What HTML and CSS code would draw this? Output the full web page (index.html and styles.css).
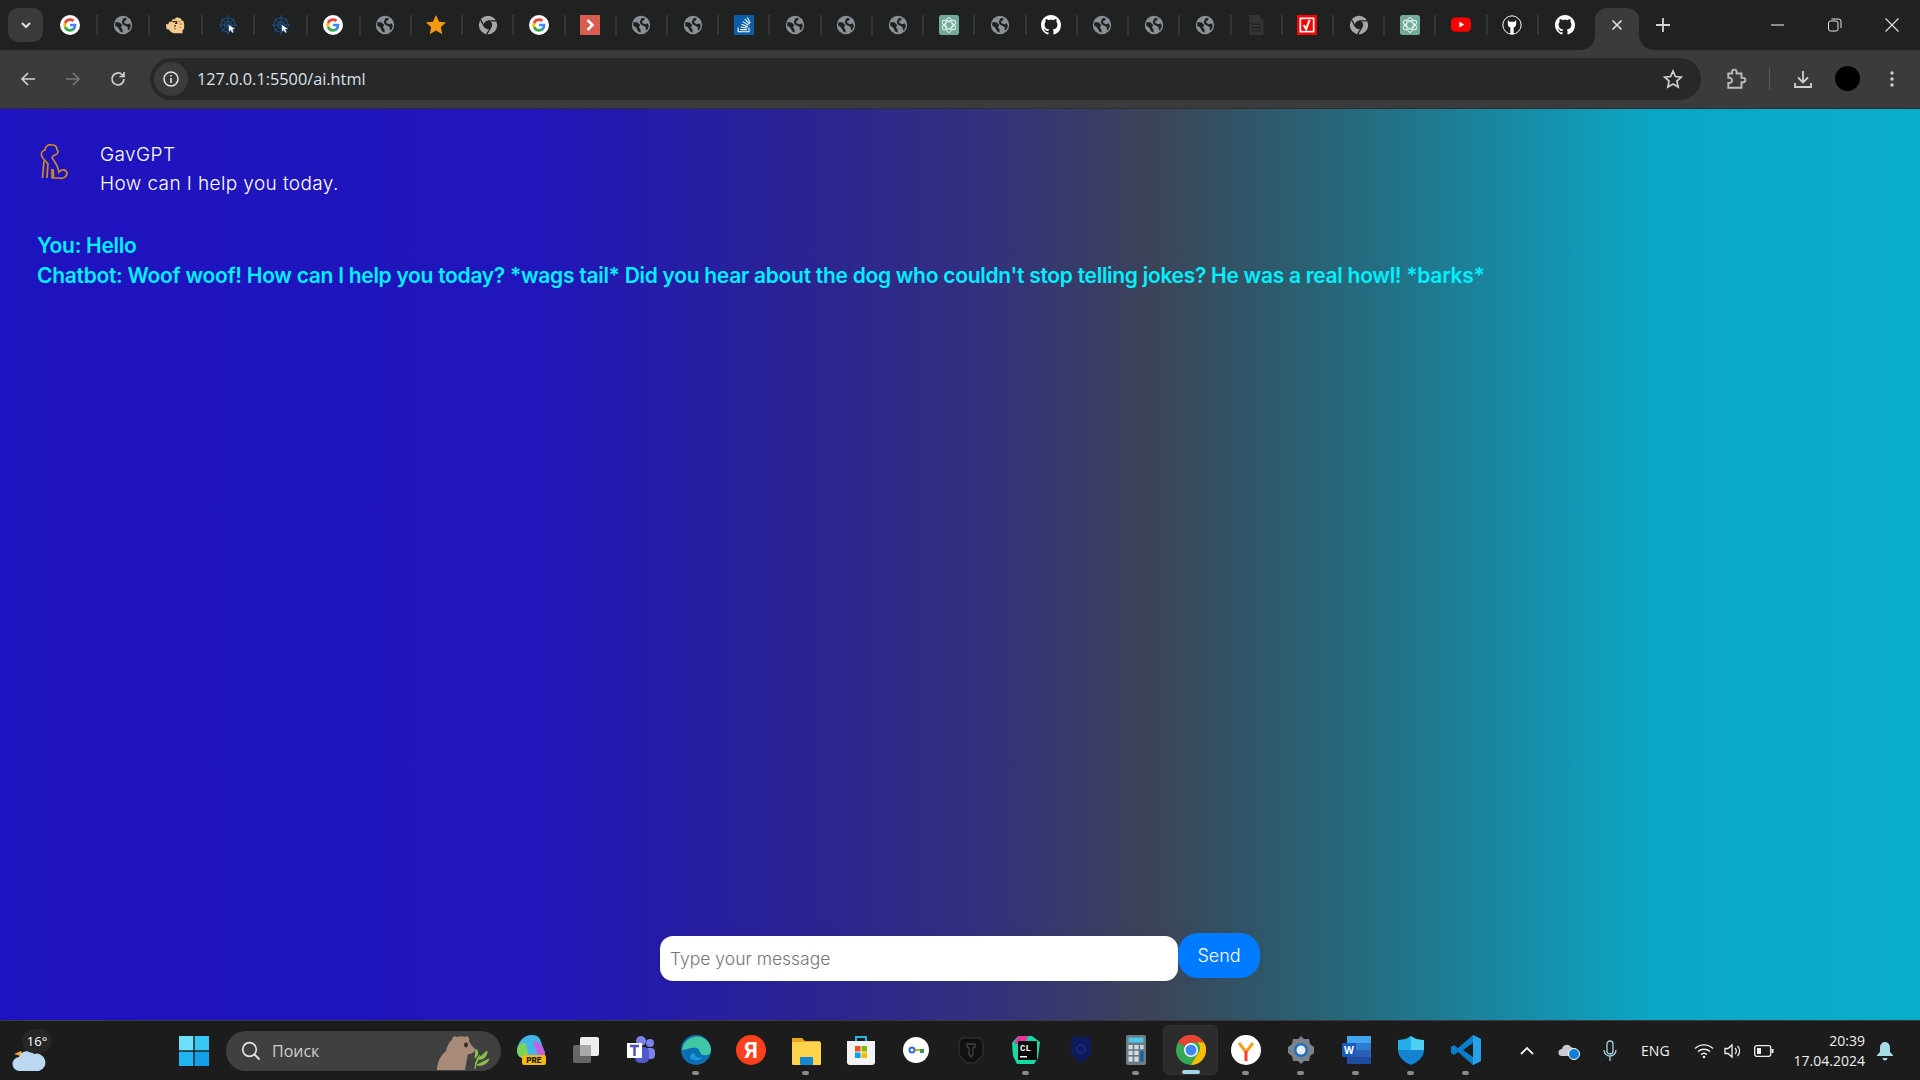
FILE: index.html
```html
<!DOCTYPE html>
<html lang="en">
<head>
    <meta charset="UTF-8">
    <title>GavGPT</title>
    <link rel="stylesheet" href="styles.css">
</head>
<body>
    <svg class="defs" width="0" height="0">
        <symbol id="i-g" viewBox="0 0 24 24">
            <circle cx="12" cy="12" r="12" fill="#fff"/>
            <path d="M19.6 12.2c0-.6-.1-1.100-.2-1.600H12v3h4.300c-.2 1-.8 1.900-1.600 2.400v2h2.600c1.500-1.400 2.300-3.400 2.300-5.800z" fill="#4285f4"/>
            <path d="M12 20c2.200 0 4-.7 5.300-2l-2.600-2c-.7.500-1.600.8-2.700.8-2.100 0-3.900-1.400-4.500-3.300H4.800v2.100C6.100 18.200 8.800 20 12 20z" fill="#34a853"/>
            <path d="M7.500 13.500c-.3-1-.3-2 0-3V8.400H4.800a8 8 0 0 0 0 7.200z" fill="#fbbc05"/>
            <path d="M12 7.200c1.200 0 2.200.4 3 1.200l2.300-2.300C16 4.800 14.200 4 12 4 8.800 4 6.100 5.800 4.800 8.400l2.700 2.100c.6-1.900 2.400-3.300 4.500-3.300z" fill="#ea4335"/>
        </symbol>
        <symbol id="i-globe" viewBox="0 0 24 24">
            <circle cx="12" cy="12" r="11" fill="#8b9097"/>
            <path d="M3 8.500l5 .5 3 3-1.500 3 2 2.500v3.500l-2.500-1-3-5-3.500-2.500zM13 3.500l3.500.5-1 2.500-2.500 1 1 2.500 3.500 1 2.500-1 1.500 3-1.500 4-2 1.500-.5-4-3-1.500-3-2-1-3 1.500-3z" fill="#202222"/>
        </symbol>
        <symbol id="i-web" viewBox="0 0 24 24">
            <g fill="none" stroke="#1c4f86" stroke-width="1.200">
                <path d="M12 0v24M1 12h22M4 4l16 16M20 4L4 20"/>
                <path d="M12 3l6.500 2.500L21 12l-2.500 6.500L12 21l-6.500-2.500L3 12l2.500-6.500z"/>
                <path d="M12 7.500l3.200 1.300 1.300 3.200-1.300 3.200-3.200 1.300-3.200-1.300L7.500 12l1.300-3.200z"/>
            </g>
            <path d="M13 12l7 4.500-3 .8 1.600 3.300-1.600.8-1.600-3.300-2.200 1.800z" fill="#fff"/>
        </symbol>
        <symbol id="i-chrome" viewBox="0 0 24 24">
            <circle cx="12" cy="12" r="11" fill="#a4a6a8"/>
            <circle cx="12" cy="12" r="5" fill="#202222"/>
            <path d="M12 7h10M8 14.500L3 5.500M15.500 14.500L10.500 23" stroke="#202222" stroke-width="1.500"/>
        </symbol>
        <symbol id="i-gpt" viewBox="0 0 24 24">
            <rect width="24" height="24" rx="3" fill="#74aa9c"/>
            <g fill="none" stroke="#e6f3ef" stroke-width="1.200">
                <ellipse cx="12" cy="12" rx="4" ry="9"/>
                <ellipse cx="12" cy="12" rx="4" ry="9" transform="rotate(60 12 12)"/>
                <ellipse cx="12" cy="12" rx="4" ry="9" transform="rotate(120 12 12)"/>
            </g>
        </symbol>
        <symbol id="i-github" viewBox="0 0 16 16">
            <path fill="#fff" d="M8 0C3.580 0 0 3.580 0 8c0 3.540 2.290 6.530 5.470 7.590.4.070.55-.17.55-.38 0-.19-.01-.82-.01-1.490-2.010.37-2.530-.49-2.690-.94-.09-.23-.48-.94-.82-1.130-.28-.15-.68-.52-.01-.53.630-.01 1.080.58 1.230.82.720 1.210 1.870.87 2.330.66.070-.52.280-.87.510-1.070-1.780-.2-3.640-.89-3.640-3.950 0-.87.310-1.590.820-2.150-.08-.2-.36-1.020.08-2.120 0 0 .670-.21 2.200.82.640-.18 1.320-.27 2-.27s1.360.09 2 .27c1.530-1.040 2.200-.82 2.200-.82.440 1.100.160 1.920.08 2.120.51.560.82 1.270.82 2.150 0 3.070-1.870 3.750-3.650 3.950.290.250.540.730.540 1.480 0 1.070-.01 1.930-.01 2.200 0 .210.150.460.550.380A8.010 8.010 0 0 0 16 8c0-4.420-3.580-8-8-8z"/>
        </symbol>
    </svg>

    <header class="tabstrip">
        <button class="tab-search">
            <svg width="12" height="12" viewBox="0 0 12 12"><path d="M2 4l4 4 4-4" fill="none" stroke="#e3e3e3" stroke-width="2"/></svg>
        </button>
        <div class="tabs">
            <div class="tab"><svg class="fav"><use href="#i-g"/></svg></div>
            <div class="tab"><svg class="fav"><use href="#i-globe"/></svg></div>
            <div class="tab">
                <svg class="fav" viewBox="0 0 24 24">
                    <path d="M1 11h3l1-3h3l1-3h3l1-2h3l1 1 2 0 1 3h2l1 4v5l-2 3v3H10l-3-2-3-3H2z" fill="#f6cb90"/>
                    <path d="M9 8h5v2h-2M12 12v2M12 16v1" fill="none" stroke="#3a2a15" stroke-width="1.600"/>
                    <path d="M16 7l3 2M17 11l4 0M17 15l3 0" stroke="#c08a4a" stroke-width="1.200"/>
                </svg>
            </div>
            <div class="tab"><svg class="fav"><use href="#i-web"/></svg></div>
            <div class="tab"><svg class="fav"><use href="#i-web"/></svg></div>
            <div class="tab"><svg class="fav"><use href="#i-g"/></svg></div>
            <div class="tab"><svg class="fav"><use href="#i-globe"/></svg></div>
            <div class="tab">
                <svg class="fav" viewBox="0 0 24 24"><path d="M12 0l3.700 8 8.300.9-6.200 5.700 1.800 8.400L12 18.700 4.400 23l1.800-8.400L0 8.900 8.300 8z" fill="#f29a13"/></svg>
            </div>
            <div class="tab"><svg class="fav"><use href="#i-chrome"/></svg></div>
            <div class="tab"><svg class="fav"><use href="#i-g"/></svg></div>
            <div class="tab">
                <svg class="fav" viewBox="0 0 24 24"><rect width="24" height="24" rx="1" fill="#d85c50"/><path d="M9 6l6 6-6 6" fill="none" stroke="#fff" stroke-width="3"/></svg>
            </div>
            <div class="tab"><svg class="fav"><use href="#i-globe"/></svg></div>
            <div class="tab"><svg class="fav"><use href="#i-globe"/></svg></div>
            <div class="tab">
                <svg class="fav" viewBox="0 0 24 24">
                    <rect width="24" height="24" fill="#0a5ea8"/>
                    <path d="M5 15v5h13v-5M7.500 17.500h8M8 14.500l8 1M9 11l7.500 3M10.500 8l7 4.500M13 5l5.500 6M16 3l3.500 7" fill="none" stroke="#fff" stroke-width="1.300"/>
                </svg>
            </div>
            <div class="tab"><svg class="fav"><use href="#i-globe"/></svg></div>
            <div class="tab"><svg class="fav"><use href="#i-globe"/></svg></div>
            <div class="tab"><svg class="fav"><use href="#i-globe"/></svg></div>
            <div class="tab"><svg class="fav"><use href="#i-gpt"/></svg></div>
            <div class="tab"><svg class="fav"><use href="#i-globe"/></svg></div>
            <div class="tab"><svg class="fav"><use href="#i-github"/></svg></div>
            <div class="tab"><svg class="fav"><use href="#i-globe"/></svg></div>
            <div class="tab"><svg class="fav"><use href="#i-globe"/></svg></div>
            <div class="tab"><svg class="fav"><use href="#i-globe"/></svg></div>
            <div class="tab">
                <svg class="fav" viewBox="0 0 24 24"><path d="M4 0h11l6 6v18H4z" fill="#333535"/><path d="M7 11h11M7 15h11M7 19h11" stroke="#202222" stroke-width="1.500"/></svg>
            </div>
            <div class="tab">
                <svg class="fav" viewBox="0 0 24 24"><rect width="24" height="24" fill="#f00"/><rect x="3" y="3" width="18" height="18" fill="#fff"/><rect x="5" y="5" width="14" height="14" fill="#f00"/><path d="M8 12l3 5 4-11" fill="none" stroke="#fff" stroke-width="2.500"/></svg>
            </div>
            <div class="tab"><svg class="fav"><use href="#i-chrome"/></svg></div>
            <div class="tab"><svg class="fav"><use href="#i-gpt"/></svg></div>
            <div class="tab">
                <svg class="fav" viewBox="0 0 24 24"><rect y="3" width="24" height="17" rx="5" fill="#f00"/><path d="M10 8l6 3.500-6 3.500z" fill="#fff"/></svg>
            </div>
            <div class="tab">
                <svg class="fav" viewBox="0 0 24 24"><circle cx="12" cy="12" r="11" fill="#202222" stroke="#fff" stroke-width="1.200"/><path d="M7 6l2 2h6l2-2v5l-1 3-2 1v8h-4v-8l-2-1-1-3z" fill="#fff"/></svg>
            </div>
            <div class="tab"><svg class="fav"><use href="#i-github"/></svg></div>
        </div>
        <div class="tab-active">
            <svg width="12" height="12" viewBox="0 0 12 12"><path d="M1.500 1.500l9 9M10.500 1.500l-9 9" stroke="#e3e3e3" stroke-width="1.600"/></svg>
        </div>
        <div class="tab-new">
            <svg width="14" height="14" viewBox="0 0 14 14"><path d="M7 0v14M0 7h14" stroke="#d5d5d5" stroke-width="1.800"/></svg>
        </div>
        <div class="win-buttons">
            <div class="win-btn"><svg width="14" height="14" viewBox="0 0 14 14"><path d="M0 7h13" stroke="#e3e3e3" stroke-width="1.100"/></svg></div>
            <div class="win-btn"><svg width="14" height="14" viewBox="0 0 14 14"><rect x=".5" y="3" width="9.500" height="10" rx="2" fill="none" stroke="#e3e3e3"/><path d="M3.500 1h7a2.500 2.500 0 0 1 2.500 2.500V10" fill="none" stroke="#e3e3e3"/></svg></div>
            <div class="win-btn"><svg width="14" height="14" viewBox="0 0 14 14"><path d="M.5.500l13 13M13.500.500l-13 13" stroke="#e3e3e3" stroke-width="1.100"/></svg></div>
        </div>
    </header>

    <nav class="toolbar">
        <svg class="tool-icon" viewBox="0 0 16 16"><path d="M15 8H2M8 2L2 8l6 6" fill="none" stroke="#cfcfcf" stroke-width="1.700"/></svg>
        <svg class="tool-icon" viewBox="0 0 16 16"><path d="M1 8h13M8 2l6 6-6 6" fill="none" stroke="#777" stroke-width="1.700"/></svg>
        <svg class="tool-icon" viewBox="0 0 16 16"><path d="M14 8a6 6 0 1 1-1.800-4.300L14 5.500M14 1v4.500H9.500" fill="none" stroke="#cfcfcf" stroke-width="1.700"/></svg>
        <div class="omnibox">
            <span class="site-info">
                <svg width="16" height="16" viewBox="0 0 16 16"><circle cx="8" cy="8" r="7" fill="none" stroke="#e3e3e3" stroke-width="1.500"/><path d="M8 7v5M8 4v1.600" stroke="#e3e3e3" stroke-width="1.600"/></svg>
            </span>
            <span class="url">127.0.0.1:5500/ai.html</span>
            <svg class="star" width="20" height="20" viewBox="0 0 20 20"><path d="M10 2l2.400 5.500 5.900.6-4.400 4 1.300 5.900L10 15l-5.200 3 1.300-5.900-4.400-4 5.900-.6z" fill="none" stroke="#cfcfcf" stroke-width="1.700"/></svg>
        </div>
        <svg class="ext-icon" viewBox="0 0 20 20"><path d="M3 5h3.500V3.500a2 2 0 0 1 4 0V5H15v4h1.500a2 2 0 0 1 0 4H15v5H3v-4.500h1.500a2.300 2.300 0 0 0 0-4.500H3z" fill="none" stroke="#bdbdbd" stroke-width="1.700"/></svg>
        <span class="tool-sep"></span>
        <svg class="dl-icon" viewBox="0 0 20 20"><path d="M10 2v11M5 8.500l5 5 5-5M2 14v4h16v-4" fill="none" stroke="#cfcfcf" stroke-width="1.800"/></svg>
        <span class="avatar"></span>
        <svg class="menu-icon" viewBox="0 0 4 16"><circle cx="2" cy="2" r="1.700" fill="#cfcfcf"/><circle cx="2" cy="8" r="1.700" fill="#cfcfcf"/><circle cx="2" cy="14" r="1.700" fill="#cfcfcf"/></svg>
    </nav>

    <main class="page">
        <div class="chat-head">
            <svg class="dog" viewBox="0 0 28 36">
                <path d="M7 34l1-14C6 17 2 15 1.500 11 1 8.500 3 6.500 5 6c0-4 4-6 7-5 3 0 5 2 5 5 2 1 1 4-2 5l-2 1c-1 1-1 2 0 3 3 4 5 8 6 13 2-3 7-3 8 1 0 4-4 6-8 5h-6c1-2 0-6 0-9" fill="none" stroke="#d08a24" stroke-width="1.700"/>
                <path d="M4 17L2.500 34M12 25v9" fill="none" stroke="#d08a24" stroke-width="1.700"/>
            </svg>
            <div class="chat-intro">
                <div>GavGPT</div>
                <div>How can I help you today.</div>
            </div>
        </div>
        <div class="messages">
            <div>You: Hello</div>
            <div>Chatbot: Woof woof! How can I help you today? *wags tail* Did you hear about the dog who couldn't stop telling jokes? He was a real howl! *barks*</div>
        </div>
        <form class="chat-form">
            <input class="chat-input" type="text" placeholder="Type your message">
            <button class="send-btn" type="button">Send</button>
        </form>
    </main>

    <footer class="taskbar">
        <div class="weather">
            <svg width="36" height="34" viewBox="0 0 36 34">
                <path d="M4 14l7-3 3 6z" fill="#f2a23a"/>
                <path d="M10 31a7 7 0 0 1-1-14 9 9 0 0 1 15-3 8 8 0 0 1 5 17z" fill="#bcd8f0"/>
            </svg>
            <span class="temp">16°</span>
        </div>
        <svg class="win-logo" viewBox="0 0 30 30">
            <rect width="14.300" height="14.300" fill="#6fe0fb"/><rect x="15.700" width="14.300" height="14.300" fill="#38c6f4"/>
            <rect y="15.700" width="14.300" height="14.300" fill="#20b4f0"/><rect x="15.700" y="15.700" width="14.300" height="14.300" fill="#12a0e8"/>
        </svg>
        <div class="search">
            <svg width="20" height="20" viewBox="0 0 20 20"><circle cx="8.500" cy="8.500" r="6.800" fill="none" stroke="#e3e3e3" stroke-width="1.700"/><path d="M13.500 13.500l5 5" stroke="#e3e3e3" stroke-width="1.900"/></svg>
            <span>Поиск</span>
            <svg class="bear" width="56" height="42" viewBox="0 0 56 42">
                <path d="M2 41c0-8 4-15 9-19 1-5 3-9 6-11 0-3 3-5 5-3 3-1 6-1 8 0 2-2 5 0 4 4 1 3 4 6 6 8 0 3-3 5-7 5-1 5-2 11-3 16z" fill="#a78a77"/>
                <ellipse cx="31" cy="16" rx="2" ry="2.400" fill="#332a25"/>
                <path d="M40 40c0-6 2-11 5-14M43 30l9-8c0 5-3 9-9 8zM42 36l12-6c-2 5-7 7-12 6zM40 29l1-9c3 3 2 7-1 9z" fill="#8dc24a" stroke="#8dc24a"/>
            </svg>
        </div>
        <div class="task-apps">
            <div class="app">
                <svg viewBox="0 0 30 30">
                    <path d="M1 15C2 7 7 0 16 0c6 0 8 3 9 7l4 11c0 3-2 5-6 5H7c-4 0-6-4-6-8z" fill="#3fb5e8"/>
                    <path d="M1 15c0-5 6-9 9-6l3 14H7c-4 0-6-4-6-8z" fill="#7ed35a"/>
                    <path d="M17 7c4-2 9 2 12 11 0 3-2 5-6 5z" fill="#c45fe0"/>
                    <rect x="6" y="20" width="24" height="10" rx="2" fill="#f5b915"/>
                    <text x="18" y="28" class="pre-label">PRE</text>
                </svg>
            </div>
            <div class="app">
                <svg viewBox="0 0 30 30"><rect x="2" y="10" width="18" height="18" rx="2" fill="#666"/><rect x="9" y="2" width="19" height="19" rx="2" fill="#eee"/><rect x="9" y="10" width="11" height="11" fill="#aaa"/></svg>
            </div>
            <div class="app">
                <svg viewBox="0 0 30 30"><circle cx="24" cy="8" r="4" fill="#7b83eb"/><rect x="18" y="13" width="11" height="11" rx="4" fill="#7b83eb"/><circle cx="15" cy="6" r="5" fill="#7b83eb"/><rect x="9" y="12" width="14" height="16" rx="5" fill="#5059c9"/><rect x="1" y="8" width="15" height="15" fill="#fff"/><path d="M4 11h9M8.500 11v10" stroke="#4b53bc" stroke-width="2.500"/></svg>
            </div>
            <div class="app has-dot">
                <svg viewBox="0 0 30 30"><circle cx="15" cy="15" r="15" fill="#0c6fb5"/><path d="M1 15C2 5 12 0 20 2c6 2 10 7 10 13 0 5-5 6-8 5-4-1-2-5-6-7-5-2-10 2-15 2z" fill="#42c7a6"/><path d="M9 23c4 3 10 3 13-1-5 2-8 0-9-4-2 0-4 2-4 5z" fill="#1a9bd8"/></svg>
            </div>
            <div class="app">
                <svg viewBox="0 0 30 30"><circle cx="15" cy="15" r="15" fill="#fc3f1d"/><text x="15" y="23" class="ya-label">Я</text></svg>
            </div>
            <div class="app has-dot">
                <svg viewBox="0 0 30 30"><path d="M1 3h10l3 3h15v6H1z" fill="#e8a91f"/><rect x="1" y="7" width="29" height="23" rx="1" fill="#fcd34d"/><rect x="9" y="22" width="13" height="8" rx="1" fill="#1688d0"/></svg>
            </div>
            <div class="app">
                <svg viewBox="0 0 30 30"><path d="M10 7V2h10v5" fill="none" stroke="#27b5e5" stroke-width="2"/><path d="M1 6h28v21a3 3 0 0 1-3 3H4a3 3 0 0 1-3-3z" fill="#f3f3f3"/><rect x="9" y="11" width="5.500" height="5.500" fill="#f25022"/><rect x="15.500" y="11" width="5.500" height="5.500" fill="#7fba00"/><rect x="9" y="17.500" width="5.500" height="5.500" fill="#00a4ef"/><rect x="15.500" y="17.500" width="5.500" height="5.500" fill="#ffb900"/></svg>
            </div>
            <div class="app">
                <svg viewBox="0 0 30 30"><circle cx="15" cy="15" r="13" fill="#fff"/><circle cx="11" cy="15" r="2.500" fill="none" stroke="#2b6be0" stroke-width="2"/><path d="M14 15h8" stroke="#e0a020" stroke-width="2"/><rect x="19" y="14" width="4" height="4" fill="#2f9e4f"/></svg>
            </div>
            <div class="app">
                <svg viewBox="0 0 30 30"><path d="M6 3h18l3 4v13l-8 8h-8l-8-8V7z" fill="#111" stroke="#2c2c2c" stroke-width="1.500"/><path d="M11 9h8v3l-2 1v6l-2 3-2-3v-6l-2-1z" fill="none" stroke="#444" stroke-width="1.300"/></svg>
            </div>
            <div class="app has-dot">
                <svg viewBox="0 0 30 30"><path d="M7 1l14 0 8 6 -2 16-4 6H6l-4-8L1 8z" fill="#18d9a2"/><path d="M7 1l10 0-3 8H3z" fill="#e8349c"/><rect x="7" y="6" width="19" height="19" fill="#0a0a0a"/><text x="9" y="16" class="cl-label">CL</text><rect x="9" y="21" width="7" height="1.500" fill="#fff"/></svg>
            </div>
            <div class="app">
                <svg viewBox="0 0 30 30"><path d="M5 2h20v17l-10 10L5 19z" fill="#0e1a5c"/><circle cx="15" cy="14" r="4" fill="none" stroke="#1f2f8a" stroke-width="1.500"/></svg>
            </div>
            <div class="app has-dot">
                <svg viewBox="0 0 24 36"><rect width="24" height="36" rx="2" fill="#6c7c86"/><rect x="3" y="3" width="18" height="6" fill="#4fc6e8"/><g fill="#d5dbe0"><rect x="3" y="12" width="5" height="5"/><rect x="10" y="12" width="5" height="5"/><rect x="17" y="12" width="4" height="5"/><rect x="3" y="19" width="5" height="5"/><rect x="10" y="19" width="5" height="5"/><rect x="3" y="26" width="5" height="6"/><rect x="10" y="26" width="5" height="6"/></g><rect x="17" y="19" width="4" height="13" fill="#1a5fa8"/></svg>
            </div>
            <div class="app active">
                <svg viewBox="0 0 30 30"><circle cx="15" cy="15" r="15" fill="#34a853"/><path d="M15 0a15 15 0 0 1 13 7.500H15a7.500 7.500 0 0 0-6.500 3.800L2 7A15 15 0 0 1 15 0z" fill="#ea4335"/><path d="M28 7.500a15 15 0 0 1-13 22.500l6.500-11a7.500 7.500 0 0 0 0-11.500z" fill="#fbbc05"/><circle cx="15" cy="15" r="7" fill="#fff"/><circle cx="15" cy="15" r="5.500" fill="#4285f4"/></svg>
            </div>
            <div class="app has-dot">
                <svg viewBox="0 0 30 30"><circle cx="15" cy="15" r="15" fill="#fff"/><path d="M8 8l7 9 7-9" fill="none" stroke="#fc9a1d" stroke-width="3"/><path d="M15 16v10" stroke="#f0402a" stroke-width="3"/></svg>
            </div>
            <div class="app has-dot">
                <svg viewBox="0 0 30 30"><path d="M15 1l3 3h5l1 5 4 3v6l-4 3-1 5h-5l-3 3-3-3H7l-1-5-4-3v-6l4-3 1-5h5z" fill="#7a828a"/><circle cx="15" cy="15" r="7" fill="#1f6fc0"/><circle cx="15" cy="15" r="4.500" fill="#e6edf3"/></svg>
            </div>
            <div class="app has-dot">
                <svg viewBox="0 0 30 30"><rect x="6" y="1" width="24" height="28" rx="2" fill="#2b7cd3"/><rect x="6" y="1" width="24" height="7" fill="#41a5ee"/><rect x="6" y="15" width="24" height="7" fill="#2b5fb8"/><rect x="6" y="22" width="24" height="7" fill="#1f4ba0"/><rect x="1" y="8" width="14" height="14" rx="1" fill="#185abd"/><text x="8" y="19" class="w-label">W</text></svg>
            </div>
            <div class="app has-dot">
                <svg viewBox="0 0 30 30"><path d="M15 1c4 3 8 4 13 4v10c0 7-6 12-13 15C8 27 2 22 2 15V5c5 0 9-1 13-4z" fill="#1484d0"/><path d="M15 1c4 3 8 4 13 4v10H15z" fill="#4fd0f2"/><path d="M2 5c5 0 9-1 13-4v14H2z" fill="#25aee8"/></svg>
            </div>
            <div class="app has-dot">
                <svg viewBox="0 0 30 30"><path d="M22 0l8 4v22l-8 4L7 17l-4 3-3-2V12l3-2 4 3z" fill="#0a7fc9"/><path d="M22 8L12 15l10 7z" fill="#1c1c1c"/><path d="M22 0l8 4v22l-8 4z" fill="#27a0e8"/><path d="M22 8v14l-6-7z" fill="#1c1c1c"/></svg>
            </div>
        </div>
        <div class="tray">
            <svg class="tray-chevron" width="14" height="9" viewBox="0 0 14 9"><path d="M1 8l6-6 6 6" fill="none" stroke="#f0f0f0" stroke-width="1.800"/></svg>
            <svg class="tray-cloud" width="22" height="18" viewBox="0 0 22 18"><path d="M4 14a3.500 3.500 0 0 1 0-7 5 5 0 0 1 9-2 4 4 0 0 1 3 4v5z" fill="#c8ccd0"/><circle cx="16" cy="12" r="5.500" fill="#0e7fd8" stroke="#fff"/></svg>
            <svg class="tray-mic" width="14" height="22" viewBox="0 0 14 22"><rect x="4" y="1" width="6" height="13" rx="3" fill="none" stroke="#a3d3e4" stroke-width="1.300"/><path d="M1 10a6 6 0 0 0 12 0M7 16v5" fill="none" stroke="#a3d3e4" stroke-width="1.300"/></svg>
            <span class="lang">ENG</span>
            <svg class="tray-wifi" width="20" height="16" viewBox="0 0 20 16"><path d="M1 5.500a13 13 0 0 1 18 0M4 8.500a9 9 0 0 1 12 0M7 11.500a4.500 4.500 0 0 1 6 0" fill="none" stroke="#f0f0f0" stroke-width="1.400"/><circle cx="10" cy="14" r="1.300" fill="#f0f0f0"/></svg>
            <svg class="tray-vol" width="18" height="16" viewBox="0 0 18 16"><path d="M1 5.500h3L8 2v12l-4-3.500H1z" fill="none" stroke="#f0f0f0" stroke-width="1.300"/><path d="M11 5a4 4 0 0 1 0 6M13.500 3a7 7 0 0 1 0 10" fill="none" stroke="#f0f0f0" stroke-width="1.200"/></svg>
            <svg class="tray-bat" width="20" height="12" viewBox="0 0 20 12"><rect x=".7" y=".7" width="16" height="10.600" rx="2" fill="none" stroke="#f0f0f0" stroke-width="1.300"/><rect x="3" y="3" width="4" height="6" fill="#f0f0f0"/><rect x="17.500" y="4" width="2" height="4" fill="#f0f0f0"/></svg>
            <div class="clock">
                <div>20:39</div>
                <div>17.04.2024</div>
            </div>
            <svg class="tray-bell" width="18" height="20" viewBox="0 0 18 20"><path d="M9 1c-3 0-5 2.500-5 6v4l-3 3v1h16v-1l-3-3V7c0-3.500-2-6-5-6z" fill="#a7dbe8"/><path d="M6.500 17h5a2.500 2.500 0 0 1-5 0z" fill="#a7dbe8"/></svg>
        </div>
    </footer>
</body>
</html>
```

FILE: styles.css
```css
* {
    box-sizing: border-box;
}
html, body {
    height: 100%;
}
body {
    margin: 0;
    display: flex;
    flex-direction: column;
    height: 1080px;
    overflow: hidden;
    font-family: "Inter", sans-serif;
}
.defs {
    position: absolute;
}

/* browser tab row */
.tabstrip {
    height: 50px;
    flex: none;
    display: flex;
    align-items: flex-start;
    background-color: #202222;
    padding-left: 8px;
}
.tab-search {
    width: 35px;
    height: 34px;
    margin-top: 8px;
    border: none;
    border-radius: 10px;
    background-color: #3b3b3b;
    display: flex;
    justify-content: center;
    align-items: center;
}
.tabs {
    display: flex;
    margin-left: 2px;
    margin-top: 15px;
}
.tab {
    width: 51.24px;
    height: 20px;
    display: flex;
    justify-content: center;
    align-items: center;
    border-right: 2px solid #343636;
}
.tab:nth-child(-n+6) {
    width: 52.6px;
}
.tab:last-child {
    border-right: none;
}
.fav {
    width: 20px;
    height: 20px;
}
.tab-active {
    width: 44px;
    height: 42px;
    margin-top: 8px;
    margin-left: 5px;
    padding-bottom: 8px;
    background-color: #3b3b3b;
    border-radius: 12px 12px 0 0;
    display: flex;
    justify-content: center;
    align-items: center;
    position: relative;
}
.tab-active::before, .tab-active::after {
    content: "";
    position: absolute;
    bottom: 0;
    width: 14px;
    height: 14px;
}
.tab-active::before {
    left: -14px;
    background: radial-gradient(circle at 0 0, transparent 13.5px, #3b3b3b 14px);
}
.tab-active::after {
    right: -14px;
    background: radial-gradient(circle at 100% 0, transparent 13.5px, #3b3b3b 14px);
}
.tab-new {
    width: 44px;
    height: 50px;
    margin-left: 1.5px;
    display: flex;
    justify-content: center;
    align-items: center;
}
.win-buttons {
    margin-left: auto;
    display: flex;
}
.win-btn {
    width: 57px;
    height: 50px;
    display: flex;
    justify-content: center;
    align-items: center;
}

/* address bar row */
.toolbar {
    height: 59px;
    flex: none;
    display: flex;
    align-items: center;
    padding-bottom: 1px;
    background-color: #3b3b3b;
    border-bottom: 1px solid #2e2e2e;
    padding-left: 20px;
}
.tool-icon {
    width: 16px;
    height: 16px;
    margin-right: 29px;
}
.tool-icon:nth-child(3) {
    margin-right: 24px;
}
.omnibox {
    width: 1551px;
    height: 42px;
    border-radius: 21px;
    background-color: #282828;
    display: flex;
    align-items: center;
    padding-left: 4px;
    padding-right: 18px;
}
.site-info {
    width: 34px;
    height: 34px;
    border-radius: 50%;
    background-color: #3b3b3b;
    display: flex;
    justify-content: center;
    align-items: center;
}
.url {
    margin-left: 9px;
    font-family: "Open Sans", sans-serif;
    font-size: 16.3px;
    color: #d9e2ea;
}
.star {
    margin-left: auto;
}
.ext-icon {
    width: 22px;
    height: 22px;
    margin-left: 24px;
}
.tool-sep {
    width: 1px;
    height: 22px;
    background-color: #5a5a5a;
    margin-left: 22px;
}
.dl-icon {
    width: 20px;
    height: 22px;
    margin-left: 23px;
}
.avatar {
    width: 25px;
    height: 25px;
    border-radius: 50%;
    background-color: #000;
    margin-left: 22px;
}
.menu-icon {
    width: 4px;
    height: 16px;
    margin-left: 30px;
}

/* chat page */
.page {
    flex: 1;
    display: flex;
    flex-direction: column;
    background: linear-gradient(to right, #1e13c0 0%, #2016ba 28%, #2b2392 42%, #33307e 51%, #3d4358 60%, #2a6072 68%, #0ca6c6 86%, #08aecb 100%);
    padding: 31px 37px 0;
    min-height: 0;
}
.chat-head {
    display: flex;
    color: #fff;
    font-size: 19px;
    letter-spacing: 0.4px;
    line-height: 29px;
    font-weight: 300;
}
.dog {
    width: 28px;
    height: 36px;
    margin: 4px 32px 0 3px;
}
.messages {
    margin-top: 33px;
    color: #00f0ff;
    font-size: 21px;
    line-height: 30px;
    font-weight: 600;
    letter-spacing: -0.29px;
}
.chat-form {
    margin-top: auto;
    margin-bottom: 43px;
    align-self: center;
    width: 600px;
    display: flex;
    align-items: flex-start;
    box-shadow: 0 0 10px rgba(0, 0, 0, 0.05);
    height: 44px;
}
.chat-input {
    width: 518px;
    height: 45px;
    margin-top: 3px;
    padding: 0 10px;
    border: none;
    border-radius: 13px;
    background-color: #fff;
    font-family: "Inter", sans-serif;
    font-size: 17.5px;
    font-weight: 300;
}
.chat-input::placeholder {
    color: #777;
}
.send-btn {
    width: 82px;
    height: 45px;
    border: none;
    border-radius: 20px;
    background-color: #007bff;
    color: #fff;
    font-family: "Inter", sans-serif;
    font-size: 18px;
    font-weight: 300;
}

/* windows taskbar */
.taskbar {
    height: 60px;
    flex: none;
    display: flex;
    align-items: center;
    background-color: #1c1c1c;
    border-top: 1px solid #3a3a42;
    position: relative;
}
.weather {
    width: 179px;
    padding-left: 10px;
    position: relative;
    height: 46px;
    display: flex;
    align-items: flex-end;
}
.temp {
    position: absolute;
    left: 22px;
    top: 1px;
    width: 30px;
    height: 24px;
    border-radius: 12px;
    background-color: #262626;
    color: #fff;
    font-family: "Open Sans", sans-serif;
    font-size: 13px;
    line-height: 24px;
    text-align: center;
}
.win-logo {
    width: 30px;
    height: 30px;
}
.search {
    width: 275px;
    height: 40px;
    margin-left: 17px;
    border-radius: 20px;
    background-color: #404040;
    display: flex;
    align-items: center;
    padding-left: 15px;
    color: #cfcfcf;
    font-family: "Open Sans", sans-serif;
    font-size: 16px;
    position: relative;
    overflow: hidden;
}
.search span {
    margin-left: 11px;
}
.bear {
    position: absolute;
    right: 10px;
    bottom: 0;
}
.task-apps {
    display: flex;
    margin-left: 2px;
    margin-top: -2px;
}
.app {
    width: 55px;
    height: 50px;
    display: flex;
    justify-content: center;
    align-items: center;
    position: relative;
}
.app svg {
    width: 30px;
    height: 30px;
}
.has-dot::after, .active::after {
    content: "";
    position: absolute;
    bottom: 0;
    left: 24px;
    width: 7px;
    height: 4px;
    border-radius: 2px;
    background-color: #8a8a8a;
}
.active {
    background-color: #2b2b2b;
    border-radius: 6px;
    border: 1px solid #333;
}
.active::after {
    left: 18px;
    width: 18px;
    background-color: #a3d3e8;
}
.pre-label {
    font-family: "Inter", sans-serif;
    font-size: 8px;
    font-weight: 800;
    fill: #222;
    text-anchor: middle;
}
.ya-label {
    font-family: "Inter", sans-serif;
    font-size: 21px;
    font-weight: 700;
    fill: #fff;
    text-anchor: middle;
}
.cl-label {
    font-family: "Liberation Mono", monospace;
    font-size: 9px;
    font-weight: 700;
    fill: #fff;
}
.w-label {
    font-family: "Inter", sans-serif;
    font-size: 10px;
    font-weight: 700;
    fill: #fff;
    text-anchor: middle;
}
.tray {
    position: absolute;
    right: 0;
    top: 0;
    bottom: 0;
    display: flex;
    align-items: center;
    color: #f0f0f0;
    font-family: "Open Sans", sans-serif;
    font-size: 14px;
}
.tray-cloud {
    margin-left: 24px;
}
.tray-mic {
    margin-left: 23px;
}
.lang {
    margin-left: 24px;
}
.tray-wifi {
    margin-left: 24px;
}
.tray-vol {
    margin-left: 10px;
}
.tray-bat {
    margin-left: 12px;
}
.clock {
    margin-left: 20px;
    text-align: right;
    line-height: 20px;
    font-size: 14px;
}
.tray-bell {
    margin-left: 11px;
    margin-right: 26px;
}
```
